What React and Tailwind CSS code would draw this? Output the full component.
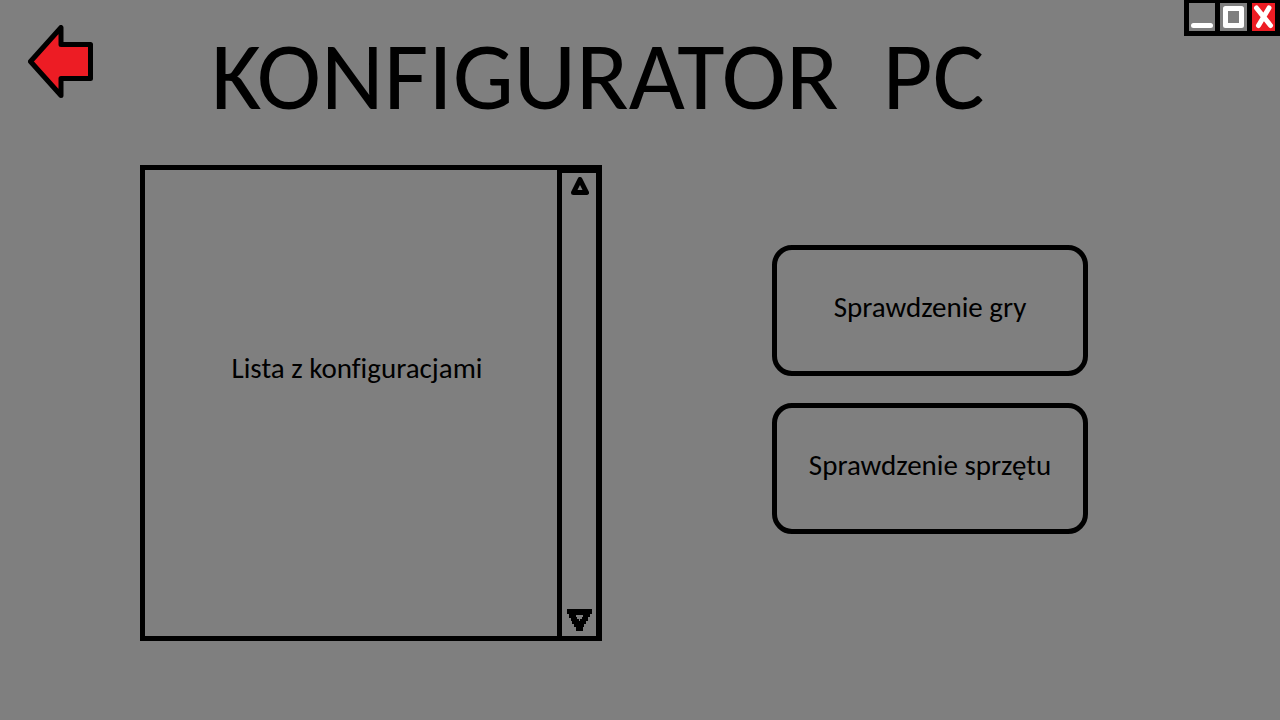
function BackButton() {
  return (
    <button type="button" aria-label="Wstecz" className="mt-[25px] shrink-0">
      <svg width="66" height="73" viewBox="0 0 66 73" className="block">
        <path
          d="M33 2.5 L33 19.5 L62.5 19.5 L62.5 53.5 L33 53.5 L33 70.5 L2.5 36.5 Z"
          fill="#ed1c24"
          stroke="#000"
          strokeWidth="5"
          strokeLinejoin="round"
        />
      </svg>
    </button>
  );
}

function WindowControls() {
  return (
    <div className="ml-auto flex shrink-0 gap-[5px] bg-black pt-[3px] pr-[5px] pb-[5px] pl-[5px]">
      <button type="button" aria-label="Minimalizuj" className="bg-[#7f7f7f]">
        <svg width="26" height="28" viewBox="0 0 26 28" className="block">
          <path d="M4.5 22.5 H21.5" stroke="#fff" strokeWidth="5" strokeLinecap="round" />
        </svg>
      </button>
      <button type="button" aria-label="Maksymalizuj" className="bg-[#7f7f7f]">
        <svg width="27" height="28" viewBox="0 0 27 28" className="block">
          <rect x="5.5" y="5.5" width="16" height="17" fill="none" stroke="#fff" strokeWidth="5" strokeLinejoin="round" />
        </svg>
      </button>
      <button type="button" aria-label="Zamknij" className="bg-[#ed1c24]">
        <svg width="23" height="28" viewBox="0 0 23 28" className="block">
          <path d="M4.5 5 L18.5 22.5 M17 5 L6.5 22.5" stroke="#fff" strokeWidth="5" strokeLinecap="round" />
        </svg>
      </button>
    </div>
  );
}

function ScrollBar() {
  return (
    <div className="flex w-10 shrink-0 flex-col items-center justify-between border-t-3 border-r border-l-5 border-black pt-1 pb-[5px]">
      <button type="button" aria-label="Przewiń w górę">
        <svg width="20" height="18" viewBox="0 0 20 18" className="block">
          <path d="M11 2.5 L17.5 15.5 H4.5 Z" stroke="#000" strokeWidth="5" strokeLinejoin="round" fill="#7f7f7f" />
        </svg>
      </button>
      <button type="button" aria-label="Przewiń w dół">
        <svg width="25" height="22" viewBox="0 0 25 22" className="block">
          <path
            d="M0 0 H25 V5 H23 V8 H21 V12 H19 V15 H17 V18 H16 V22 H9 V18 H7 V15 H5 V12 H4 V9 H2 V5 H0 Z M9 6 V8 H10 V10 H12 V12 H13 V10 H15 V8 H16 V6 Z"
            fill="#000"
            fillRule="evenodd"
          />
        </svg>
      </button>
    </div>
  );
}

function ActionButton({ children }) {
  return (
    <button
      type="button"
      className="flex h-[131px] w-full items-center justify-center rounded-[20px] border-5 border-black pb-2 text-[29px] leading-8"
    >
      {children}
    </button>
  );
}

export default function App() {
  return (
    <div className="flex min-h-screen flex-col bg-[#7f7f7f] font-['Carlito','Lato',sans-serif] text-black [font-variant-ligatures:none]">
      <header className="flex items-start pl-7">
        <BackButton />
        <h1 className="mt-[26px] mb-[39px] ml-[117px] text-[97px] leading-[100px] whitespace-pre">KONFIGURATOR  PC</h1>
        <WindowControls />
      </header>
      <main className="grid flex-1 grid-cols-[462fr_316fr] gap-[170px] pr-48 pb-[79px] pl-35">
        <section aria-label="Lista z konfiguracjami" className="flex border-5 border-black">
          <div className="flex flex-1 items-center justify-center pb-[70px] pl-3">
            <p className="text-[29px] leading-8">Lista z konfiguracjami</p>
          </div>
          <ScrollBar />
        </section>
        <nav className="flex flex-col gap-[27px] pt-20">
          <ActionButton>Sprawdzenie gry</ActionButton>
          <ActionButton>Sprawdzenie sprzętu</ActionButton>
        </nav>
      </main>
    </div>
  );
}
